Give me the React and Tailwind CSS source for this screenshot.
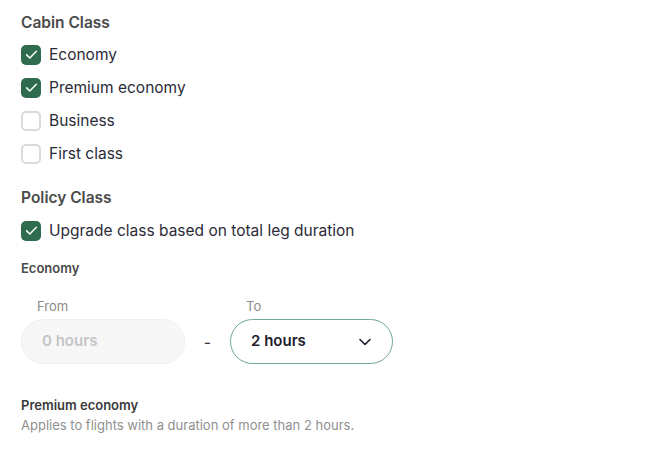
import React, { useState } from 'react';

const Check = ({ checked, onToggle, label }) => (
  <label className="flex items-center gap-2 h-[33px] cursor-pointer" onClick={onToggle}>
    <span
      className={
        checked
          ? 'w-5 h-5 rounded-[5px] bg-[#2f6b4f] flex items-center justify-center'
          : 'w-5 h-5 rounded-[5px] border-2 border-[#d8dadd] bg-white'
      }
    >
      {checked && (
        <svg width="15" height="15" viewBox="0 0 16 16" fill="none">
          <path d="M2.8 8.4l3.4 3.4L13.2 4.6" stroke="white" strokeWidth="1.6" strokeLinecap="round" strokeLinejoin="round" />
        </svg>
      )}
    </span>
    <span className="text-[15.5px] text-[#2b2b38]">{label}</span>
  </label>
);

const App = () => {
  const [cabin, setCabin] = useState({ economy: true, premium: true, business: false, first: false });
  const [upgrade, setUpgrade] = useState(true);
  const toggle = (k) => setCabin({ ...cabin, [k]: !cabin[k] });

  return (
    <div className="w-[656px] h-[450px] bg-white px-[21px] pt-[13px] font-['Inter',sans-serif]">
      <h2 className="text-[15.5px] font-semibold text-[#4a4a4a] leading-5">Cabin Class</h2>
      <div className="mt-[5px]">
        <Check checked={cabin.economy} onToggle={() => toggle('economy')} label="Economy" />
        <Check checked={cabin.premium} onToggle={() => toggle('premium')} label="Premium economy" />
        <Check checked={cabin.business} onToggle={() => toggle('business')} label="Business" />
        <Check checked={cabin.first} onToggle={() => toggle('first')} label="First class" />
      </div>

      <h2 className="mt-[18px] text-[15.5px] font-semibold text-[#4a4a4a] leading-5">Policy Class</h2>
      <div className="mt-[6px]">
        <Check checked={upgrade} onToggle={() => setUpgrade(!upgrade)} label="Upgrade class based on total leg duration" />
      </div>

      <h3 className="mt-[11px] text-[13px] font-semibold text-[#4a4a4a] leading-5">Economy</h3>

      <div className="mt-[20px] flex items-end">
        <div className="flex flex-col">
          <span className="pl-4 text-[13px] text-[#8a8a8a] leading-4">From</span>
          <div className="mt-[5px] w-[164px] h-[45px] rounded-full bg-[#f7f7f7] border border-[#efefef] flex items-center px-5 text-[15px] font-semibold text-[#c4c4c8]">
            0 hours
          </div>
        </div>
        <div className="w-[45px] h-[45px] flex items-center justify-center text-[16px] text-[#3a3a3a]">-</div>
        <div className="flex flex-col">
          <span className="pl-4 text-[13px] text-[#8a8a8a] leading-4">To</span>
          <button className="mt-[5px] w-[163px] h-[45px] rounded-full bg-white border border-[#6fa88f] flex items-center justify-between pl-5 pr-[19px] text-[15px] font-semibold text-[#1c1c2b]">
            2 hours
            <svg width="16" height="16" viewBox="0 0 16 16" fill="none">
              <path d="M3 5.5l5 5 5-5" stroke="#1c1c2b" strokeWidth="1.6" strokeLinecap="round" strokeLinejoin="round" />
            </svg>
          </button>
        </div>
      </div>

      <h3 className="mt-[31px] text-[13px] font-semibold text-[#3a3a3a] leading-5">Premium economy</h3>
      <p className="text-[13px] text-[#8f8f8f] leading-5">Applies to flights with a duration of more than 2 hours.</p>
    </div>
  );
};

export default App;
